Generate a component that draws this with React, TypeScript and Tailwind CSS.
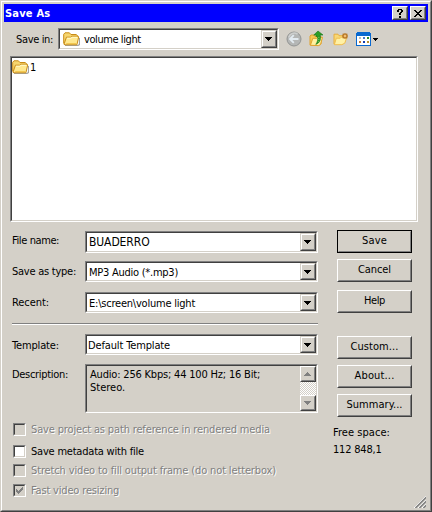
import type { ReactNode } from "react";

const SUNKEN =
  "border border-t-[#808080] border-l-[#808080] border-r-white border-b-white";
const SUNKEN_INNER =
  "border border-t-[#404040] border-l-[#404040] border-r-[#d4d0c8] border-b-[#d4d0c8]";
const RAISED =
  "border border-t-white border-l-white border-r-[#404040] border-b-[#404040]";
const RAISED_INNER =
  "border border-t-[#d4d0c8] border-l-[#d4d0c8] border-r-[#808080] border-b-[#808080]";

function Arrow({ color = "#000" }: { color?: string }) {
  return (
    <svg width="7" height="4" viewBox="0 0 7 4" shapeRendering="crispEdges">
      <path d="M0 0h7v1H0zM1 1h5v1H1zM2 2h3v1H2zM3 3h1v1H3z" fill={color} />
    </svg>
  );
}

function DropButton() {
  return (
    <span className="flex h-full w-4 shrink-0 border border-t-[#d4d0c8] border-l-[#d4d0c8] border-r-[#404040] border-b-[#404040] bg-[#d4d0c8]">
      <span className="flex flex-1 items-center justify-center border border-t-white border-l-white border-r-[#808080] border-b-[#808080] pr-px">
        <Arrow />
      </span>
    </span>
  );
}

function Combo({ className, children }: { className: string; children: ReactNode }) {
  return (
    <div className={`flex bg-white ${SUNKEN} ${className}`}>
      <div className={`flex min-w-0 flex-1 ${SUNKEN_INNER}`}>
        <div className="flex min-w-0 flex-1 items-center">{children}</div>
        <DropButton />
      </div>
    </div>
  );
}

function PushButton({ className, children }: { className: string; children: ReactNode }) {
  return (
    <button className={`flex h-[23px] w-[75px] shrink-0 bg-[#d4d0c8] ${RAISED} ${className}`}>
      <span className={`flex h-full flex-1 justify-center leading-[18px] ${RAISED_INNER}`}>
        {children}
      </span>
    </button>
  );
}

function Folder() {
  return (
    <svg width="17" height="15" viewBox="0 0 17 15">
      <path d="M2 13.5h13l1.5-1V6" fill="none" stroke="#8b8b8b" strokeWidth="1.2" opacity=".8" />
      <path d="M.7 11.5V2.3L2 .8h4.4l1.5 1.7h5.4l1 1V5" fill="#f6d66f" stroke="#c98c16" />
      <path d="M1 12.3 3.4 5.2h4.2l1.2-1h6.4l.5.8-1.8 7.8H2z" fill="#ffe88e" stroke="#c98c16" />
      <path d="M4 6.2h4l1.2-.9h5" fill="none" stroke="#fffbd0" />
      <path d="M3.2 11.5h10" fill="none" stroke="#f3c850" />
    </svg>
  );
}

function BackIcon() {
  return (
    <svg width="16" height="16" viewBox="0 0 16 16">
      <circle cx="8" cy="8" r="7" fill="#b4b6b5" stroke="#929493" />
      <path d="M2.8 6.5A5.6 5.6 0 0 1 11.5 3" fill="none" stroke="#cdcfce" strokeWidth="1.6" />
      <path d="M12.5 8H4.2M7.8 4.2 4 8l3.8 3.8" fill="none" stroke="#e2eaf0" strokeWidth="1.9" />
    </svg>
  );
}

function UpIcon() {
  return (
    <svg width="16" height="17" viewBox="0 0 16 17">
      <path d="M1 15V6l1-1h3l1 1.5h6V14l-3 1.6z" fill="#f5ca56" stroke="#e0a22e" />
      <path d="m1.4 15.3 2.4-7h4l1-1h4.7l-2 7.3-2 1z" fill="#fff0a0" stroke="#e0a22e" />
      <path d="M9 1 4.8 5H7v1.4h1.4c1 3-.2 6-1.6 8 4.1-1.6 5.2-4.8 4.5-8.4V5H14z" fill="#2c9d27" stroke="#167517" strokeWidth=".6" />
      <path d="M9.8 7v5" stroke="#75c764" strokeDasharray="1 1" />
    </svg>
  );
}

function NewFolderIcon() {
  return (
    <svg width="16" height="14" viewBox="0 0 16 14">
      <path d="M1 12V2.2h4l1 1.5h6V10L9 12.5z" fill="#f8d876" stroke="#e8ae3c" />
      <path d="m1.3 12.7 2-6.5h4l1-1h5.5l-2 6-3 1.5z" fill="#fff1a5" stroke="#efbd50" />
      <path d="M12 1v6M9 4h6M9.7 1.7l4.6 4.6M14.3 1.7 9.7 6.3" stroke="#b77724" strokeWidth="1.3" />
      <circle cx="12" cy="4" r="1.3" fill="#f1bd72" />
    </svg>
  );
}

function ViewIcon() {
  return (
    <svg width="15" height="14" viewBox="0 0 15 14" shapeRendering="crispEdges">
      <path d="M1 0h13v1h1v13H0V1h1z" fill="#0868d0" />
      <path d="M1 4h13v9H1z" fill="#fff" />
      <path d="M3 5h2v2H3z" fill="#b6bcc0" />
      <path d="M7 5h2v2H7z" fill="#4a78c8" />
      <path d="M11 5h2v2h-2z" fill="#2c8a2c" />
      <path d="M3 9h2v2H3z" fill="#c87832" />
      <path d="M7 9h2v2H7z" fill="#123cb0" />
      <path d="M11 9h2v2h-2z" fill="#b89030" />
    </svg>
  );
}

function Check({
  className,
  label,
  tracking,
  disabled,
  checked,
}: {
  className: string;
  label: string;
  tracking: string;
  disabled?: boolean;
  checked?: boolean;
}) {
  return (
    <label className={`flex h-[13px] items-center gap-[5px] ${className}`}>
      <span className={`flex size-[13px] shrink-0 ${SUNKEN} ${disabled ? "bg-[#d4d0c8]" : "bg-white"}`}>
        <span className={`flex flex-1 items-center justify-center ${SUNKEN_INNER}`}>
          {checked && (
            <svg width="7" height="7" viewBox="0 0 7 7" shapeRendering="crispEdges">
              <path d="M0 2h1v1h1v1h1V3h1V2h1V1h1V0h1v3H6v1H5v1H4v1H3v1H2V6H1V5H0z" fill="#808080" />
            </svg>
          )}
        </span>
      </span>
      <span
        className={`${tracking} ${disabled ? "text-[#808080] [text-shadow:1px_1px_0_#fff]" : ""}`}
      >
        {label}
      </span>
    </label>
  );
}

export default function App() {
  return (
    <div className="h-[512px] w-[432px] border border-t-[#d4d0c8] border-l-[#d4d0c8] border-r-[#404040] border-b-[#404040] bg-[#d4d0c8] font-['DejaVu_Sans_Condensed','DejaVu_Sans',sans-serif] text-[11px] leading-[13px] whitespace-nowrap text-black">
      <div className="flex h-full flex-col border border-t-white border-l-white border-r-[#808080] border-b-[#808080]">
        <header className="mx-[2px] mt-[2px] flex h-[18px] shrink-0 items-center bg-[#0000ff] pr-[2px] pl-[1px]">
          <h1 className="flex-1 text-[11px] font-bold tracking-[0.2px] text-white">Save As</h1>
          <button className={`flex h-[14px] w-4 bg-[#d4d0c8] ${RAISED}`}>
            <span className={`flex h-full flex-1 items-center justify-center ${RAISED_INNER}`}>
              <svg width="6" height="9" viewBox="0 0 6 9" shapeRendering="crispEdges">
                <path d="M1 0h4v1h1v2H5v1H4v2H2V4h1V3h1V1H2v2H0V1h1zM2 7h2v2H2z" />
              </svg>
            </span>
          </button>
          <button className={`ml-[2px] flex h-[14px] w-4 bg-[#d4d0c8] ${RAISED}`}>
            <span className={`flex h-full flex-1 items-center justify-center ${RAISED_INNER}`}>
              <svg width="8" height="7" viewBox="0 0 8 7" shapeRendering="crispEdges">
                <path d="M0 0h2v1h1v1h2V1h1V0h2v1H7v1H6v1H5v1h1v1h1v1h1v1H6V6H5V5H3v1H2v1H0V6h1V5h1V4h1V3H2V2H1V1H0z" />
              </svg>
            </span>
          </button>
        </header>

        <div className="mt-[6px] flex h-[22px] shrink-0 items-center pl-[14px]">
          <span className="mt-px w-[42px] tracking-[-0.35px]">Save in:</span>
          <Combo className="h-[22px] w-[221px]">
            <span className="ml-[3px] flex">
              <Folder />
            </span>
            <span className="ml-[4px] tracking-[-0.42px]">volume light</span>
          </Combo>
          <div className="ml-[7px] flex items-center">
            <BackIcon />
            <span className="ml-[7px] -mt-px"><UpIcon /></span>
            <span className="ml-[8px]"><NewFolderIcon /></span>
            <span className="ml-[7px] -mt-px"><ViewIcon /></span>
            <span className="ml-[2px]">
              <svg width="5" height="3" viewBox="0 0 5 3" shapeRendering="crispEdges">
                <path d="M0 0h5v1H0zM1 1h3v1H1zM2 2h1v1H2z" />
              </svg>
            </span>
          </div>
        </div>

        <div className={`mt-[6px] ml-[8px] flex h-[166px] w-[408px] shrink-0 bg-white ${SUNKEN}`}>
          <div className={`flex flex-1 items-start ${SUNKEN_INNER}`}>
            <span className="mt-[2px] flex"><Folder /></span>
            <span className="mt-[3px] ml-[1px]">1</span>
          </div>
        </div>

        <div className="flex min-h-0 flex-1">
          <div className="ml-[10px] w-[306px]">
            <div className="mt-[9px] flex h-[22px]">
              <span className="mt-[3px] w-[73px] tracking-[-0.4px]">File name:</span>
              <Combo className="h-[22px] w-[233px]">
                <span className="ml-[2px] text-[12px] tracking-[-0.1px]">BUADERRO</span>
              </Combo>
            </div>
            <div className="mt-[8px] flex h-[21px]">
              <span className="mt-[4px] w-[73px] tracking-[-0.25px]">Save as type:</span>
              <Combo className="h-[21px] w-[233px]">
                <span className="mt-px ml-[2px] tracking-[-0.25px]">MP3 Audio (*.mp3)</span>
              </Combo>
            </div>
            <div className="mt-[10px] flex h-[21px]">
              <span className="mt-[4px] w-[73px] tracking-[-0.07px]">Recent:</span>
              <Combo className="h-[21px] w-[233px]">
                <span className="mt-px ml-[2px] tracking-[-0.22px]">E:\screen\volume light</span>
              </Combo>
            </div>
            <hr className="mt-[10px] h-[2px] border-t border-b border-t-[#808080] border-b-white" />
            <div className="mt-[9px] flex h-[21px]">
              <span className="mt-[5px] w-[73px] tracking-[-0.15px]">Template:</span>
              <Combo className="h-[21px] w-[233px]">
                <span className="mt-px ml-px tracking-[-0.14px]">Default Template</span>
              </Combo>
            </div>
            <div className="mt-[9px] flex h-[49px]">
              <span className="mt-[4px] w-[73px] tracking-[-0.31px]">Description:</span>
              <div className={`flex w-[233px] ${SUNKEN}`}>
                <div className={`flex flex-1 ${SUNKEN_INNER}`}>
                  <div className="mt-[2px] ml-[3px] flex-1">
                    <p className="tracking-[-0.19px]">Audio: 256 Kbps; 44 100 Hz; 16 Bit;</p>
                    <p>Stereo.</p>
                  </div>
                  <div className="flex w-4 flex-col bg-[repeating-conic-gradient(#fff_0_25%,#d4d0c8_0_50%)] bg-[length:2px_2px]">
                    <span className={`flex h-4 bg-[#d4d0c8] ${RAISED}`}>
                      <span className={`flex flex-1 items-center justify-center pr-px ${RAISED_INNER}`}>
                        <span className="rotate-180"><Arrow color="#808080" /></span>
                      </span>
                    </span>
                    <span className={`mt-auto flex h-4 bg-[#d4d0c8] ${RAISED}`}>
                      <span className={`flex flex-1 items-center justify-center pr-px ${RAISED_INNER}`}>
                        <Arrow color="#808080" />
                      </span>
                    </span>
                  </div>
                </div>
              </div>
            </div>
            <div className="ml-px">
              <Check className="mt-[10px]" label="Save project as path reference in rendered media" tracking="tracking-[-0.15px]" disabled />
              <Check className="mt-[9px]" label="Save metadata with file" tracking="tracking-[-0.21px]" />
              <Check className="mt-[6px]" label="Stretch video to fill output frame (do not letterbox)" tracking="tracking-[-0.14px]" disabled />
              <Check className="mt-[7px]" label="Fast video resizing" tracking="tracking-[-0.17px]" disabled checked />
            </div>
          </div>

          <div className="ml-[19px] flex w-[91px] flex-col">
            <PushButton className="mt-[8px] tracking-[0.18px] outline -outline-offset-1 outline-black">Save</PushButton>
            <PushButton className="mt-[6px] tracking-[-0.09px]">Cancel</PushButton>
            <PushButton className="mt-[8px] tracking-[-0.39px]">Help</PushButton>
            <PushButton className="mt-[23px] tracking-[0.07px]">Custom...</PushButton>
            <PushButton className="mt-[6px] tracking-[0.16px]">About...</PushButton>
            <PushButton className="mt-[6px] tracking-[0.03px]">Summary...</PushButton>
            <p className="mt-[9px] -ml-[4px] tracking-[0.05px]">Free space:</p>
            <p className="mt-[4px] -ml-[4px] tracking-[-0.2px]">112 848,1</p>
            <svg className="mt-auto mr-[2px] mb-[2px] self-end" width="12" height="12" viewBox="0 0 12 12">
              <path d="M0 12 12 0M4 12l8-8M8 12l4-4" stroke="#fff" />
              <path d="m1.4 12 11-11M5.4 12l7-7M9.4 12l3-3" stroke="#808080" strokeWidth="1.5" />
            </svg>
          </div>
        </div>
      </div>
    </div>
  );
}
